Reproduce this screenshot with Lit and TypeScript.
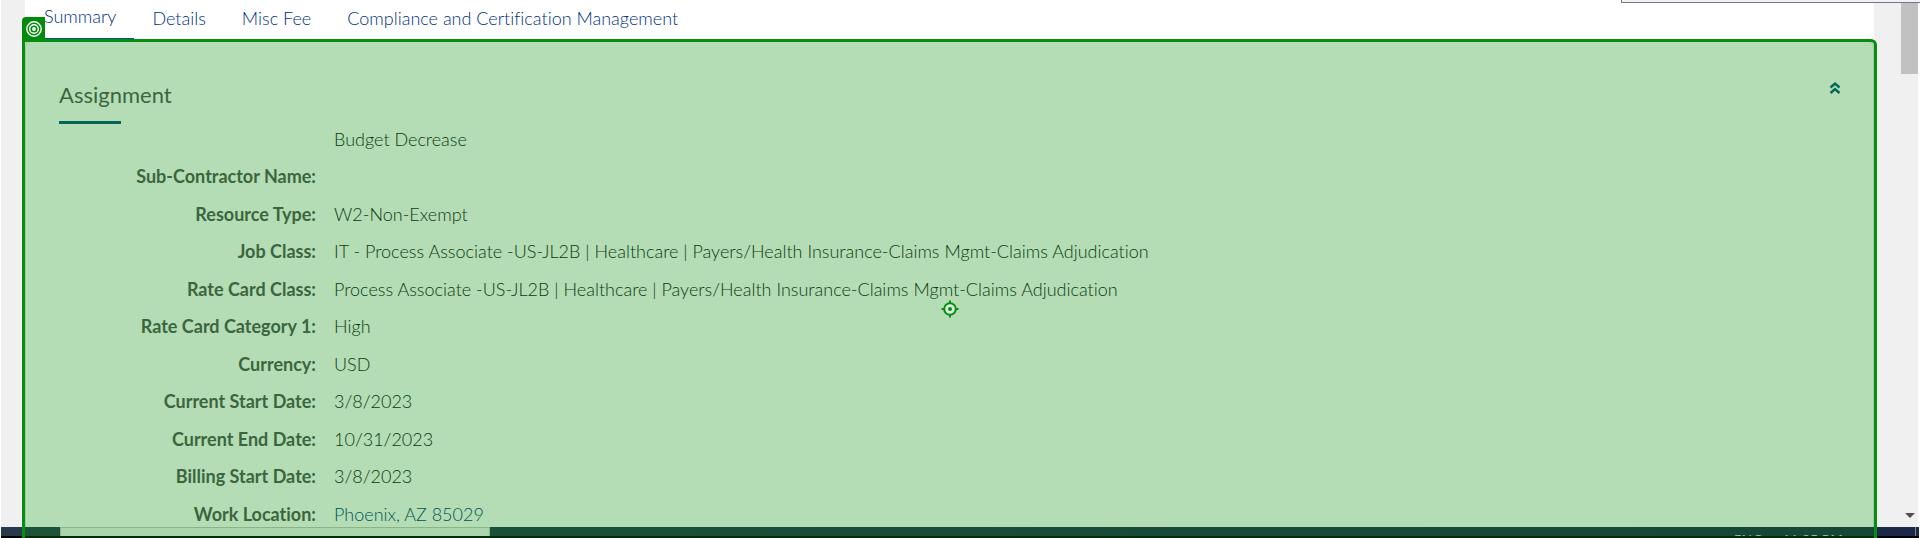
import { LitElement, html, css, svg, nothing } from "lit";
import { customElement } from "lit/decorators.js";

interface Field {
  label: string;
  value: string;
  link?: boolean;
}

const TABS = ["Summary", "Details", "Misc Fee", "Compliance and Certification Management"];

const FIELDS: Field[] = [
  { label: "", value: "Budget Decrease" },
  { label: "Sub-Contractor Name:", value: "" },
  { label: "Resource Type:", value: "W2-Non-Exempt" },
  { label: "Job Class:", value: "IT - Process Associate -US-JL2B | Healthcare | Payers/Health Insurance-Claims Mgmt-Claims Adjudication" },
  { label: "Rate Card Class:", value: "Process Associate -US-JL2B | Healthcare | Payers/Health Insurance-Claims Mgmt-Claims Adjudication" },
  { label: "Rate Card Category 1:", value: "High" },
  { label: "Currency:", value: "USD" },
  { label: "Current Start Date:", value: "3/8/2023" },
  { label: "Current End Date:", value: "10/31/2023" },
  { label: "Billing Start Date:", value: "3/8/2023" },
  { label: "Work Location:", value: "Phoenix, AZ 85029", link: true },
];

@customElement("assignment-panel")
class AssignmentPanel extends LitElement {
  static styles = css`
    :host {
      display: block;
      box-sizing: border-box;
      padding: 39px 32px 0 33px;
      border: 1px solid #e3e3e3;
      border-radius: 6px 6px 0 0;
      background: #fff;
    }
    .head {
      display: flex;
      justify-content: space-between;
      align-items: flex-start;
    }
    .title {
      margin: 0;
      font-size: 22px;
      line-height: 28px;
      font-weight: 400;
      color: #545454;
    }
    .title::after {
      content: "";
      display: block;
      width: 62px;
      height: 3px;
      margin-top: 12px;
      background: #00567b;
    }
    .collapse {
      display: flex;
      padding: 0;
      border: 0;
      background: none;
      color: #00567b;
    }
    .fields {
      display: grid;
      grid-auto-rows: 1fr;
      height: 412px;
      margin: 3px 0 0;
      font-size: 18px;
      line-height: 24px;
      font-weight: 300;
      color: #101010;
    }
    .field {
      display: grid;
      grid-template-columns: 257px 1fr;
      column-gap: 18px;
    }
    .label {
      text-align: right;
      font-weight: 700;
      color: #545454;
    }
    .value {
      margin: 0;
      white-space: nowrap;
    }
    .link {
      color: #003a70;
      text-decoration: none;
    }
  `;

  render() {
    return html`
      <div class="head">
        <h2 class="title">Assignment</h2>
        <button class="collapse" aria-label="Collapse section">
          <svg width="12" height="14" viewBox="0 0 12 14" fill="none" stroke="currentColor" stroke-width="2.400">
            <path d="M1.500 6.500 6 2.500l4.500 4M1.500 12 6 8l4.500 4" />
          </svg>
        </button>
      </div>
      <dl class="fields">
        ${FIELDS.map(
          (f) => html`<div class="field">
            <dt class="label">${f.label}</dt>
            <dd class="value">${f.link ? html`<a class="link" href="#location">${f.value}</a>` : f.value || nothing}</dd>
          </div>`
        )}
      </dl>
    `;
  }
}

@customElement("app-root")
class AppRoot extends LitElement {
  static styles = css`
    :host {
      position: relative;
      display: flex;
      flex-direction: column;
      height: 100vh;
      overflow: hidden;
      background: #fff;
      font-family: Lato, "Liberation Sans", sans-serif;
      font-variant-ligatures: none;
    }
    .page {
      display: flex;
      flex: 1;
      min-height: 0;
      margin: 0 2px 0 1px;
      background: #f0f0f0;
      overflow: hidden;
    }
    .content {
      flex: 1;
      min-width: 0;
      margin: 0 27px 0 24px;
      background: #fff;
    }
    .tabs {
      display: flex;
      height: 41px;
    }
    .tab {
      display: flex;
      flex-direction: column;
      box-sizing: border-box;
      height: 40px;
      padding: 6px 18px 0;
      font-size: 18px;
      line-height: 24px;
      font-weight: 300;
      color: #003088;
      text-decoration: none;
    }
    .tab.active {
      padding-top: 4px;
      padding-left: 19px;
      border-bottom: 2px solid #00567b;
    }
    .scrollbar {
      display: flex;
      flex-direction: column;
      justify-content: space-between;
      align-items: center;
      width: 17px;
    }
    .thumb {
      width: 17px;
      height: 74px;
      background: #c1c1c1;
    }
    .arrow {
      margin-bottom: 9px;
    }
    .taskbar {
      position: relative;
      display: flex;
      justify-content: space-between;
      box-sizing: border-box;
      height: 11px;
      margin: 0 1px;
      padding: 0 76px 0 59px;
      border-bottom: 2px solid #020306;
      background: linear-gradient(90deg, #273a4c, #1c2848);
      overflow: hidden;
    }
    .task {
      box-sizing: border-box;
      width: 430px;
      height: 11px;
      border: 1px solid #c0c6c0;
      border-bottom: 2px solid #555;
      background: #f2f4f2;
    }
    .tray {
      display: flex;
      gap: 20px;
      padding-top: 4px;
      font-family: "Noto Sans", sans-serif;
      font-size: 14px;
      line-height: 18px;
      color: #ccd;
    }
    .desk {
      position: absolute;
      top: 0;
      bottom: 0;
      right: 3px;
      width: 1px;
      background: #7d8594;
    }
    .popup {
      position: absolute;
      top: -8px;
      left: 1621px;
      right: 0;
      box-sizing: border-box;
      height: 11px;
      border: 1px solid #77777b;
      border-right: 0;
      background: #f0f0f8;
    }
    .highlight {
      position: absolute;
      top: 39px;
      right: 43px;
      bottom: -10px;
      left: 22px;
      box-sizing: border-box;
      border: 3px solid #078d10;
      border-width: 3px 3px 0 3px;
      border-radius: 0 6px 0 0;
      background: rgba(6, 141, 12, 0.3);
      background-clip: padding-box;
    }
    .badge {
      position: absolute;
      top: 17px;
      left: 22px;
      display: flex;
      align-items: center;
      justify-content: center;
      width: 23px;
      height: 23px;
      border-radius: 4px 0 0 0;
      background: #028a0c;
    }
    .target {
      position: absolute;
      top: 300px;
      left: calc(50% - 19px);
    }
  `;

  private rings() {
    return svg`<circle cx="8" cy="8" r="7.200" /><circle cx="8" cy="8" r="4.300" /><circle cx="8" cy="8" r="1.200" fill="#fff" />`;
  }

  render() {
    return html`
      <div class="page">
        <main class="content">
          <nav class="tabs">
            ${TABS.map((t, i) => html`<a class=${i === 0 ? "tab active" : "tab"} href="#tab">${t}</a>`)}
          </nav>
          <assignment-panel></assignment-panel>
        </main>
        <div class="scrollbar">
          <div class="thumb"></div>
          <svg class="arrow" width="10" height="5" viewBox="0 0 10 5"><path d="M0 0h10L5 5z" fill="#505050" /></svg>
        </div>
      </div>
      <div class="taskbar">
        <div class="task"></div>
        <div class="tray"><span>ENG</span><span>11:25 PM</span></div>
        <div class="desk"></div>
      </div>
      <div class="popup"></div>
      <div class="highlight"></div>
      <div class="badge">
        <svg width="16" height="16" viewBox="0 0 16 16" fill="none" stroke="#fff" stroke-width="1.400">${this.rings()}</svg>
      </div>
      <svg class="target" width="18" height="18" viewBox="0 0 18 18" fill="none" stroke="#078d10" stroke-width="2">
        <circle cx="9" cy="9" r="5.800" fill="#d9eed9" />
        <circle cx="9" cy="9" r="2" fill="#078d10" stroke="none" />
        <path d="M9 0.500v3M9 14.500v3M0.500 9h3M14.500 9h3" />
      </svg>
    `;
  }
}
